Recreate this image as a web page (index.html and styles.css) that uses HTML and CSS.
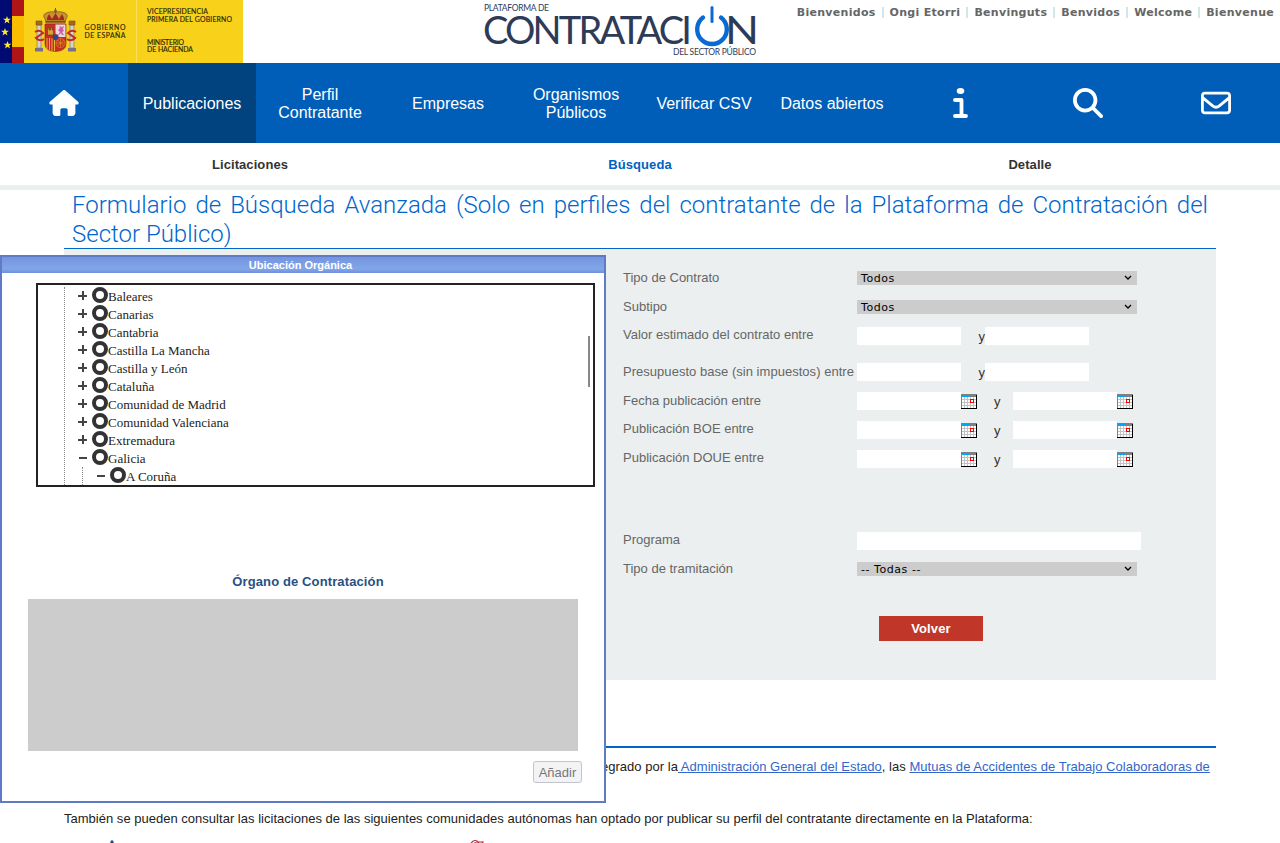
FILE: index.html
```html
<!DOCTYPE html>
<html lang="es">
<head>
<meta charset="utf-8">
<title>Plataforma de Contratación del Sector Público</title>
<link rel="stylesheet" href="styles.css">
</head>
<body>
<svg class="defs" width="0" height="0">
  <defs>
    <g id="cal" shape-rendering="crispEdges">
      <rect width="16" height="15" fill="#808080"/>
      <rect x="1" y="3" width="14" height="11" fill="#fff"/>
      <rect x="1" y="1" width="7" height="2" fill="#00a8f3"/>
      <path d="M3 3h1v11H3zM6 3h1v11H6zM9 3h1v11H9zM12 3h1v11h-1zM1 5h14v1H1zM1 8h14v1H1zM1 11h14v1H1z" fill="#c3c3c3"/>
      <path d="M0 14h16v1H0zM15 1h1v14h-1z" fill="#000"/>
      <path d="M9 5h4v4H9z" fill="#f00"/><path d="M10 6h2v2h-2z" fill="#fff"/>
    </g>
    <path id="star" d="M0-4 1-1.200 4-1.200 1.600.6 2.500 3.400 0 1.700-2.500 3.400-1.600.6-4-1.200-1-1.200z" fill="#ffe82a"/>
  </defs>
</svg>
<header class="top">
  <svg class="gov" width="243" height="63" viewBox="0 0 243 63">
    <rect width="243" height="63" fill="#f8d21a"/>
    <rect width="12" height="63" fill="#000a73"/>
    <rect x="12" width="12" height="63" fill="#ad1519"/>
    <rect x="12" y="16" width="12" height="31" fill="#fabd00"/>
    <use href="#star" x="7" y="20"/><use href="#star" x="5" y="32"/><use href="#star" x="7.500" y="45"/>
    <path d="M136.500 0v63" stroke="#fbe05a"/>
    <g stroke-width=".6">
      <path d="M46 23l-1-4q-3-4 1-6 4-2 9.500-1 5.500-1 9.500 1 4 2 1 6l-1 4z" fill="#c8932c" stroke="#6c4316"/>
      <path d="M47 18l2-4 3 5 3.500-6 3.500 6 3-5 2 4v2H47z" fill="#a32a22"/>
      <path d="M46 21.500h19" stroke="#7a4a16" stroke-width="1.500"/>
      <path d="M55.500 8v5" stroke="#7a5a20" stroke-width="1"/>
      <circle cx="55.500" cy="11" r="1.500" fill="#7c5f2c"/>
      <path d="M37 25h4v23h-4zM70 25h4v23h-4z" fill="#d5d2ca" stroke="#7d6c5a"/>
      <path d="M36 21h6v4h-6zM69 21h6v4h-6z" fill="#a2682a" stroke="#7c4c16"/>
      <path d="M35 48h8v3.500h-8zM68 48h8v3.500h-8z" fill="#77708a"/>
      <path d="M35 32q5-3 8 1l-7 5q4 4 8 1M76 32q-5-3-8 1l7 5q-4 4-8 1" fill="none" stroke="#c02c27" stroke-width="2"/>
      <path d="M45 24h21v20q0 7-10.500 7.500Q45 51 45 44z" fill="#c72d23" stroke="#842218"/>
      <path d="M55.500 24.500h10V37h-10z" fill="#e4d9df"/>
      <path d="M47.500 35v-7h1.500v2h1.500v-2.500h1.500V30h1.500v5z" fill="#dba033" stroke="#614120"/>
      <path d="M58 35l2-3-2-2 2-2-1-2 3 1 2-1-1 3 1 2-2 1 2 3h-2l-1-2-2 2z" fill="#cd5da4"/>
      <path d="M47 38v11M49.500 38v12M52 38v13M54.500 40v11" stroke="#e5b239" stroke-width="1"/>
      <circle cx="60.500" cy="43" r="4.500" fill="none" stroke="#d89428"/>
      <path d="M57 40l7 6M64 40l-7 6M60.500 39v8M56 43h9" stroke="#d89428"/>
      <circle cx="55.500" cy="37" r="2.800" fill="#264893" stroke="#942920"/>
    </g>
    <g class="gov-text">
      <text x="84.500" y="29.500" textLength="41">GOBIERNO</text>
      <text x="84.500" y="37.500" textLength="41">DE ESPAÑA</text>
      <text x="147" y="13.500" textLength="61">VICEPRESIDENCIA</text>
      <text x="147" y="21.500" textLength="85">PRIMERA DEL GOBIERNO</text>
      <text x="147" y="44.500" textLength="37">MINISTERIO</text>
      <text x="147" y="52" textLength="46">DE HACIENDA</text>
    </g>
  </svg>
  <svg class="logo" width="276" height="58" viewBox="482 0 276 58">
    <g class="logo-small">
      <text x="484" y="11" textLength="65">PLATAFORMA DE</text>
      <text x="673" y="55" textLength="83">DEL SECTOR PÚBLICO</text>
    </g>
    <text class="logo-big" x="483" y="43.500" textLength="209">CONTRATACI</text>
    <text class="logo-big" x="725" y="43.500" textLength="34" lengthAdjust="spacingAndGlyphs">N</text>
    <path d="M703 17.500A14.800 14.800 0 1 0 721 17.500" fill="none" stroke="#0a6ad4" stroke-width="4.400" stroke-linecap="round"/>
    <path d="M712 7.500v14" stroke="#0a6ad4" stroke-width="3" stroke-linecap="round"/>
  </svg>
  <ul class="langs"><li>Bienvenidos</li><li>Ongi Etorri</li><li>Benvinguts</li><li>Benvidos</li><li>Welcome</li><li>Bienvenue</li></ul>
</header>
<nav class="nav">
  <a class="icon"><svg width="30" height="26" viewBox="0 0 576 512"><path fill="#fff" d="M575.800 255.500c0 18-15 32.100-32 32.100h-32l.7 160.200c0 36-28 64.200-56 64.200H392c-22 0-32-14-32-32v-88c0-17.700-14.300-32-32-32h-80c-17.700 0-32 14.300-32 32v88c0 18-10 32-32 32h-64c-30 0-56-28-56-64V287.600H32c-18 0-32-14-32-32.100 0-9 3-17 10-24L266.400 8c7-7 15-8 22-8s15 2 21 7L564.800 231.500c8 7 12 15 11 24z"/></svg></a>
  <a class="on">Publicaciones</a><a>Perfil Contratante</a><a>Empresas</a><a>Organismos Públicos</a><a>Verificar CSV</a><a>Datos abiertos</a>
  <a class="icon"><svg width="15" height="30" viewBox="0 0 15 30"><ellipse cx="7.500" cy="3" rx="3.800" ry="3" fill="#fff"/><path d="M2 12h6.500v16M2 28h11" fill="none" stroke="#fff" stroke-width="3.800" stroke-linecap="round" stroke-linejoin="round"/></svg></a>
  <a class="icon"><svg width="30" height="30" viewBox="0 0 512 512"><path fill="#fff" d="M416 208c0 45.900-14.900 88.300-40 122.700L502.600 457.400c12.500 12.500 12.500 32.800 0 45.300s-32.800 12.500-45.300 0L330.700 376C296.300 401.100 253.900 416 208 416 93.100 416 0 322.900 0 208S93.100 0 208 0s208 93.100 208 208zM208 352a144 144 0 1 0 0-288 144 144 0 1 0 0 288z"/></svg></a>
  <a class="icon"><svg width="30" height="30" viewBox="0 0 512 512"><path fill="#fff" d="M64 112c-8.800 0-16 7.200-16 16v22.100L220.500 291.700c20.700 17 50.400 17 71.100 0L464 150.100V128c0-8.800-7.200-16-16-16H64zM48 212.200V384c0 8.800 7.200 16 16 16h384c8.800 0 16-7.200 16-16V212.200L322 328.800c-38.400 31.500-93.700 31.500-132 0L48 212.200zM0 128c0-35.300 28.700-64 64-64h384c35.300 0 64 28.700 64 64v256c0 35.300-28.700 64-64 64H64c-35.300 0-64-28.700-64-64V128z"/></svg></a>
</nav>
<nav class="sub"><a>Licitaciones</a><a class="on">Búsqueda</a><a>Detalle</a></nav>
<main class="page">
  <h1>Formulario de Búsqueda Avanzada (Solo en perfiles del contratante de la Plataforma de Contratación del Sector Público)</h1>
  <section class="form">
    <div class="row r1"><label>Tipo de Contrato</label><div class="select">Todos<svg width="8" height="6"><path d="M1 1l3 3 3-3"/></svg></div></div>
    <div class="row r2"><label>Subtipo</label><div class="select">Todos<svg width="8" height="6"><path d="M1 1l3 3 3-3"/></svg></div></div>
    <div class="row r3"><label>Valor estimado del contrato entre</label><div class="range"><i></i><span>y</span><i></i></div></div>
    <div class="row r4"><label>Presupuesto base (sin impuestos) entre</label><div class="range"><i></i><span>y</span><i></i></div></div>
    <div class="row r5"><label>Fecha publicación entre</label><div class="range dates"><i></i><svg width="16" height="15"><use href="#cal"/></svg><span>y</span><i></i><svg width="16" height="15"><use href="#cal"/></svg></div></div>
    <div class="row r6"><label>Publicación BOE entre</label><div class="range dates"><i></i><svg width="16" height="15"><use href="#cal"/></svg><span>y</span><i></i><svg width="16" height="15"><use href="#cal"/></svg></div></div>
    <div class="row r7"><label>Publicación DOUE entre</label><div class="range dates"><i></i><svg width="16" height="15"><use href="#cal"/></svg><span>y</span><i></i><svg width="16" height="15"><use href="#cal"/></svg></div></div>
    <div class="row r8"><label>Programa</label><div class="range"><i class="wide"></i></div></div>
    <div class="row r9"><label>Tipo de tramitación</label><div class="select">-- Todas --<svg width="8" height="6"><path d="M1 1l3 3 3-3"/></svg></div></div>
    <button class="back">Volver</button>
  </section>
  <div class="foot">
    <p class="integrated">egrado por la<a> Administración General del Estado</a>, las <a>Mutuas de Accidentes de Trabajo Colaboradoras de</a></p>
    <p class="also">También se pueden consultar las licitaciones de las siguientes comunidades autónomas han optado por publicar su perfil del contratante directamente en la Plataforma:</p>
    <div class="marks">
      <svg width="40" height="10"><circle cx="12" cy="3" r="1.700" fill="#2d4a7c"/></svg>
      <svg width="30" height="10"><path d="M5 6q3-6 7-4l3 4M9 6q0-3 3-2M13 3l5 0-1 2 3 1" fill="none" stroke="#b3213b" stroke-width="1.200"/></svg>
    </div>
  </div>
</main>
<section class="dialog">
  <h2>Ubicación Orgánica</h2>
  <div class="tree">
    <ul>
      <li><b class="plus"></b><em></em>Baleares</li>
      <li><b class="plus"></b><em></em>Canarias</li>
      <li><b class="plus"></b><em></em>Cantabria</li>
      <li><b class="plus"></b><em></em>Castilla La Mancha</li>
      <li><b class="plus"></b><em></em>Castilla y León</li>
      <li><b class="plus"></b><em></em>Cataluña</li>
      <li><b class="plus"></b><em></em>Comunidad de Madrid</li>
      <li><b class="plus"></b><em></em>Comunidad Valenciana</li>
      <li><b class="plus"></b><em></em>Extremadura</li>
      <li><b></b><em></em>Galicia</li>
      <li class="child"><b></b><em></em>A Coruña</li>
    </ul>
    <div class="thumb"></div>
  </div>
  <h3>Órgano de Contratación</h3>
  <div class="listbox"></div>
  <button class="add">Añadir</button>
</section>
</body>
</html>
```
FILE: styles.css
```css
* { box-sizing: border-box; }
body { margin: 0; height: 843px; overflow: hidden; position: relative; background: #fff; font: 13px "Liberation Sans", Arial, sans-serif; color: #222; }
h1, h2, h3, p, ul { margin: 0; padding: 0; }
ul { list-style: none; }
.defs { position: absolute; }

.top { height: 63px; display: grid; grid-template-columns: 482px 276px 1fr; align-items: start; }
.top svg { display: block; }
.gov-text { font: 6.9px Lato, sans-serif; fill: #2b2708; stroke: #2b2708; stroke-width: .15px; }
.logo-small { font: 8.5px Lato, sans-serif; fill: #2e3b58; }
.logo-big { font: 38px Lato, sans-serif; fill: #2e3b58; }
.langs { display: flex; justify-content: flex-end; padding: 6px 6px 0 0; font: bold 11px/13px "DejaVu Sans", sans-serif; letter-spacing: .29px; color: #666; white-space: nowrap; }
.langs li + li { margin: 1px 0 0 6px; padding-left: 6px; border-left: 2px solid #d0e8e6; height: 11px; line-height: 11px; }

.nav { height: 80px; background: #005eb8; display: grid; grid-template-columns: repeat(10, 128px); }
.nav a { display: flex; align-items: center; justify-content: center; text-align: center; color: #fff; font-size: 16px; line-height: 18px; padding: 1px 12px 0; }
.nav .icon { padding: 0; }
.nav .on { background: #00437f; }
.sub { height: 47px; border-bottom: 5px solid #ebefef; display: flex; padding: 0 55px; font-weight: bold; letter-spacing: .08px; }
.sub a { flex: 1; text-align: center; line-height: 43px; color: #333; }
.sub .on { color: #0062c3; }

.page { margin: 0 64px; }
h1 { height: 59px; padding: 1px 8px 0; border-bottom: 1px solid #0065c8; font: 300 24px/29px Roboto, sans-serif; color: #0066cc; text-align: justify; }
.form { height: 431px; background: #ebefef; padding: 19px 0 0 559px; }
.row { display: grid; grid-template-columns: 234px auto; align-items: start; color: #666; height: 29px; }
.row label { line-height: 20px; white-space: nowrap; }
.select { width: 280px; height: 14px; margin-top: 3px; padding: 0 5px 0 4px; background: #ccc; color: #000; font: 11px/15px "DejaVu Sans", sans-serif; letter-spacing: .55px; display: flex; justify-content: space-between; align-items: center; }
.select svg path { fill: none; stroke: #000; stroke-width: 1.300; }
.range { display: flex; color: #333; line-height: 20px; }
.range i { width: 104px; height: 18px; background: #fff; }
.range .wide { width: 284px; }
.range span { width: 24px; text-align: right; }
.range svg { margin-top: 2px; }
.dates span { width: 36px; text-align: left; padding-left: 17px; }
.r2 { height: 30px; }
.r3, .r4 { height: 36px; }
.r3 label { margin-top: -2px; }
.r4 label { margin-top: -1px; letter-spacing: .03px; }
.r4 { height: 29px; }
.r5 label { margin-top: -1px; }
.r6 label, .r7 label { margin-top: -2px; }
.r7 { height: 82px; }
.r8 label { margin-top: -2px; }
.r9 label { margin-top: -2px; }
.r9 .select { margin-top: 1px; }
.back { display: block; margin: 26px 0 0 256px; width: 104px; height: 25px; padding: 0; border: 0; background: #c0372a; color: #fff; font: bold 13px "Liberation Sans", Arial, sans-serif; letter-spacing: .15px; }
.foot { margin-top: 66px; border-top: 2px solid #0065c8; }
.integrated { margin: 11px 0 0 537px; line-height: 16px; white-space: nowrap; letter-spacing: .025px; }
.integrated a { color: #36c; text-decoration: underline; }
.also { margin-top: 36px; line-height: 16px; white-space: nowrap; letter-spacing: .015px; }
.marks { display: flex; gap: 325px; padding: 12px 0 0 36px; }

.dialog { position: absolute; left: 0; top: 255px; width: 606px; height: 548px; border: 2px solid #5f7bc8; background: #fff; }
h2 { height: 16px; text-align: center; color: #fff; font: bold 11px/16px "Liberation Sans", Arial, sans-serif; background: linear-gradient(#7694df, #80a6e8 75%, #7290dd); padding-right: 5px; }
.tree { display: flex; justify-content: space-between; margin: 10px 0 0 34px; width: 559px; height: 204px; border: 2px solid #222; overflow: hidden; font: 13px/18px "Liberation Serif", serif; color: #222; }
.tree ul { margin: 2px 0 0 26px; border-left: 1px dotted #888; flex: 1; }
.tree li { display: flex; height: 18px; line-height: 20px; padding-left: 13px; }
.tree li.child { margin-left: 17px; border-left: 1px dotted #888; padding-left: 13px; }
.tree b { width: 9px; height: 9px; margin: 4px 5px 0 0; background: linear-gradient(#444, #444) 1px 4px / 8px 2px no-repeat; }
.tree .plus { background: linear-gradient(#444, #444) 0 4px / 9px 2px no-repeat, linear-gradient(#444, #444) 4px 0 / 2px 9px no-repeat; }
.tree em { width: 16px; height: 16px; margin: 0; border: 4px solid #333; border-radius: 50%; }
.thumb { width: 2px; height: 51px; margin: 51px 3px 0 0; background: #888; }
h3 { margin-top: 86px; padding-left: 10px; text-align: center; font: bold 13px/17px "Liberation Sans", Arial, sans-serif; letter-spacing: .12px; color: #2a5082; }
.listbox { margin: 9px 0 0 26px; width: 550px; height: 152px; background: #ccc; }
.add { display: block; margin: 10px 22px 0 auto; width: 49px; height: 22px; padding: 0; border: 1px solid #c3c3cb; border-radius: 3px; background: #f3f3f5; color: #777; font: 13px "Liberation Sans", Arial, sans-serif; }
```
